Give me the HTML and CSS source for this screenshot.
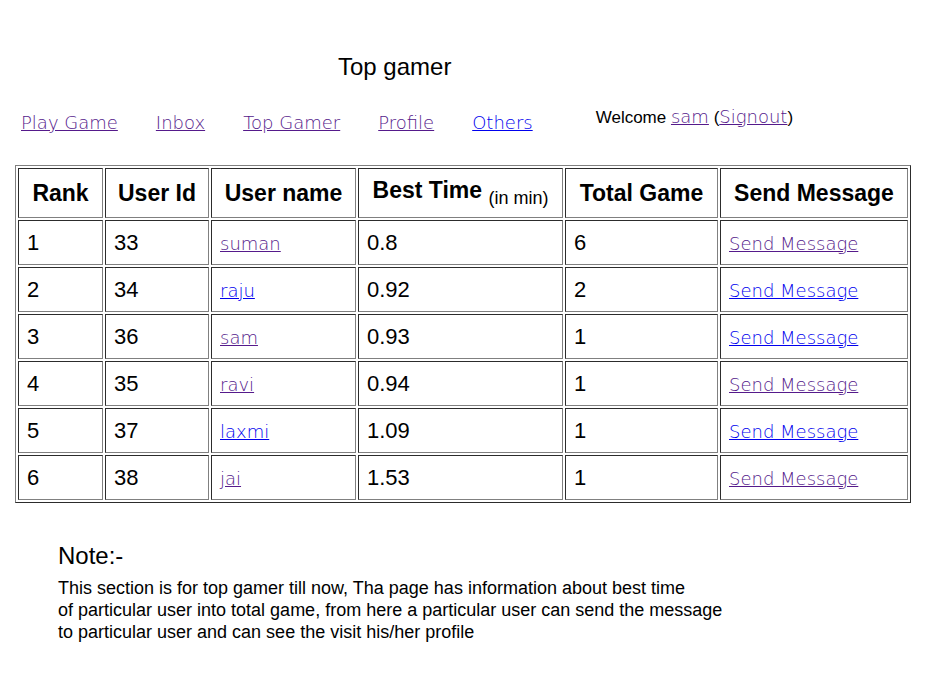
FILE: index.html
```html
<!DOCTYPE html>
<html>
<head>
<meta charset="utf-8">
<title>Top gamer</title>
<link rel="stylesheet" href="styles.css">
</head>
<body>
<div class="page">
  <div class="title">Top gamer</div>
  <div class="navbar">
    <nav class="nav">
      <a class="link visited" href="#">Play Game</a>
      <a class="link visited" href="#">Inbox</a>
      <a class="link visited" href="#">Top Gamer</a>
      <a class="link visited" href="#">Profile</a>
      <a class="link" href="#">Others</a>
    </nav>
    <div class="welcome">Welcome <a class="link visited" href="#">sam</a> (<a class="link visited" href="#">Signout</a>)</div>
  </div>
  <table class="scores">
    <thead>
      <tr>
        <th class="c1">Rank</th>
        <th class="c2">User Id</th>
        <th class="c3">User name</th>
        <th class="c4">Best Time <span class="unit">(in min)</span></th>
        <th class="c5">Total Game</th>
        <th class="c6">Send Message</th>
      </tr>
    </thead>
    <tbody>
      <tr><td>1</td><td>33</td><td><a class="link visited" href="#">suman</a></td><td>0.8</td><td>6</td><td><a class="link visited" href="#">Send Message</a></td></tr>
      <tr><td>2</td><td>34</td><td><a class="link" href="#">raju</a></td><td>0.92</td><td>2</td><td><a class="link" href="#">Send Message</a></td></tr>
      <tr><td>3</td><td>36</td><td><a class="link visited" href="#">sam</a></td><td>0.93</td><td>1</td><td><a class="link" href="#">Send Message</a></td></tr>
      <tr><td>4</td><td>35</td><td><a class="link visited" href="#">ravi</a></td><td>0.94</td><td>1</td><td><a class="link visited" href="#">Send Message</a></td></tr>
      <tr><td>5</td><td>37</td><td><a class="link" href="#">laxmi</a></td><td>1.09</td><td>1</td><td><a class="link" href="#">Send Message</a></td></tr>
      <tr><td>6</td><td>38</td><td><a class="link visited" href="#">jai</a></td><td>1.53</td><td>1</td><td><a class="link visited" href="#">Send Message</a></td></tr>
    </tbody>
  </table>
  <div class="note">
    <div class="note-title">Note:-</div>
    <p class="note-text">This section is for top gamer till now, Tha page has information about best time<br>of particular user into total game, from here a particular user can send the message<br>to particular user and can see the visit his/her profile</p>
  </div>
</div>
</body>
</html>
```

FILE: styles.css
```css
body {
  margin: 8px;
  background: #ffffff;
  color: #000000;
  font-family: "Liberation Sans", Arial, sans-serif;
}

.link {
  font-family: "DejaVu Sans", sans-serif;
  font-weight: 200;
  font-size: 18px;
  color: #0000ee;
  text-decoration: underline;
}

.link.visited {
  color: #551a8b;
}

.title {
  margin-top: 45px;
  padding-left: 330px;
  font-size: 24px;
  line-height: 28px;
}

.navbar {
  display: flex;
  align-items: flex-start;
  margin-top: 25px;
  padding-left: 13px;
}

.nav {
  display: flex;
  gap: 38px;
  padding-top: 6px;
  line-height: 22px;
}

.welcome {
  margin-left: 63px;
  font-size: 17px;
  line-height: 22px;
}

.scores {
  margin-top: 31px;
  margin-left: 7px;
  width: 896px;
  table-layout: fixed;
  border-collapse: separate;
  border-spacing: 2px;
  border: 1px outset #808080;
}

.scores th,
.scores td {
  box-sizing: border-box;
  border: 1px inset #808080;
}

.scores th {
  height: 50px;
  padding: 0 2px;
  font-size: 23px;
  font-weight: bold;
  text-align: center;
  vertical-align: middle;
}

.scores td {
  height: 45px;
  padding: 0 8px;
  font-size: 22px;
  text-align: left;
  vertical-align: middle;
}

.scores .c1 { width: 85px; }
.scores .c2 { width: 104px; }
.scores .c3 { width: 145px; }
.scores .c4 { width: 205px; }
.scores .c5 { width: 153px; }
.scores .c6 { width: 188px; }

.unit {
  font-size: 18px;
  font-weight: normal;
  vertical-align: sub;
}

.note {
  margin-top: 39px;
  padding-left: 50px;
}

.note-title {
  font-size: 24px;
  line-height: 28px;
}

.note-text {
  margin: 7px 0 0 0;
  font-size: 18px;
  line-height: 22px;
}
```
